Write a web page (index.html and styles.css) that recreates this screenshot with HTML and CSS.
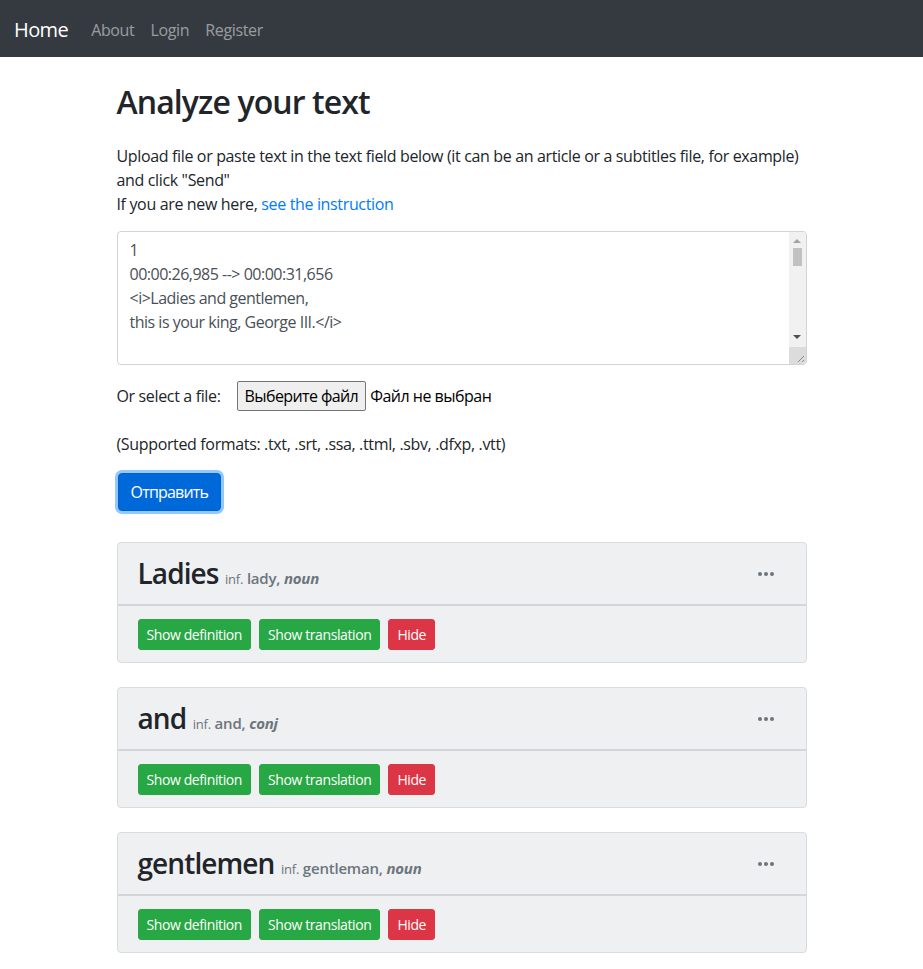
FILE: index.html
```html
<!DOCTYPE html>
<html lang="en">
<head>
<meta charset="utf-8">
<title>Analyze your text</title>
<link rel="stylesheet" href="styles.css">
</head>
<body>
<nav class="navbar">
  <a class="brand" href="#">Home</a>
  <a class="nav-link" href="#">About</a>
  <a class="nav-link" href="#">Login</a>
  <a class="nav-link" href="#">Register</a>
</nav>
<main class="container">
  <h2 class="title">Analyze your text</h2>
  <p class="intro">Upload file or paste text in the text field below (it can be an article or a subtitles file, for example) and click "Send"<br>If you are new here, <a href="#" class="link">see the instruction</a></p>
  <div class="text-input">
    <div class="text-content" contenteditable="true">1
00:00:26,985 --&gt; 00:00:31,656
&lt;i&gt;Ladies and gentlemen,
this is your king, George III.&lt;/i&gt;</div>
    <div class="scrollbar">
      <span class="arrow-up"></span>
      <span class="thumb"></span>
      <span class="track"></span>
      <span class="arrow-down"></span>
      <span class="grip">
        <svg width="17" height="17" viewBox="0 0 17 17"><path d="M15 9 L9 15 M15 13 L13 15" stroke="#8a8a8a" stroke-width="1" fill="none"/></svg>
      </span>
    </div>
  </div>
  <div class="file-row">
    <span class="file-label">Or select a file:</span>
    <span class="file-btn">Выберите файл</span>
    <span class="file-name">Файл не выбран</span>
  </div>
  <p class="formats">(Supported formats: .txt, .srt, .ssa, .ttml, .sbv, .dfxp, .vtt)</p>
  <button class="btn-send" type="button">Отправить</button>

  <section class="word-card">
    <div class="card-header">
      <h3 class="word">Ladies <small class="meta"><span class="inf">inf.</span> lady, <em>noun</em></small></h3>
      <span class="dots"><i></i><i></i><i></i></span>
    </div>
    <div class="card-body">
      <button class="btn btn-green" type="button">Show definition</button>
      <button class="btn btn-green" type="button">Show translation</button>
      <button class="btn btn-red" type="button">Hide</button>
    </div>
  </section>

  <section class="word-card">
    <div class="card-header">
      <h3 class="word">and <small class="meta"><span class="inf">inf.</span> and, <em>conj</em></small></h3>
      <span class="dots"><i></i><i></i><i></i></span>
    </div>
    <div class="card-body">
      <button class="btn btn-green" type="button">Show definition</button>
      <button class="btn btn-green" type="button">Show translation</button>
      <button class="btn btn-red" type="button">Hide</button>
    </div>
  </section>

  <section class="word-card">
    <div class="card-header">
      <h3 class="word">gentlemen <small class="meta"><span class="inf">inf.</span> gentleman, <em>noun</em></small></h3>
      <span class="dots"><i></i><i></i><i></i></span>
    </div>
    <div class="card-body">
      <button class="btn btn-green" type="button">Show definition</button>
      <button class="btn btn-green" type="button">Show translation</button>
      <button class="btn btn-red" type="button">Hide</button>
    </div>
  </section>
</main>
</body>
</html>
```
FILE: styles.css
```css
* { box-sizing: border-box; }
html, body { margin: 0; padding: 0; }
body {
  font-family: "Open Sans", "Noto Sans", sans-serif;
  font-size: 16px;
  line-height: 1.5;
  color: #212529;
  background: #fff;
  letter-spacing: -0.35px;
}
.navbar {
  background: #343a40;
  height: 57px;
  display: flex;
  align-items: center;
  padding: 2px 16px 0 14px;
}
.brand {
  color: #fff;
  font-size: 20px;
  text-decoration: none;
  margin-right: 15px;
  line-height: 30px;
  letter-spacing: -0.6px;
}
.nav-link {
  color: rgba(255,255,255,.5);
  text-decoration: none;
  padding: 0 8px;
  line-height: 24px;
}
.container {
  width: 720px;
  margin: 0 auto;
  padding: 0 15px;
}
.title {
  font-size: 32px;
  font-weight: 600;
  line-height: 1.2;
  margin: 26px 0 23px;
  letter-spacing: -0.9px;
}
.intro { margin: 0 0 15px; }
.link { color: #007bff; text-decoration: none; }
.text-input {
  display: flex;
  width: 100%;
  height: 134px;
  border: 1px solid #ced4da;
  border-radius: 4px;
  margin: 0 0 16px;
  overflow: hidden;
}
.text-content {
  flex: 1;
  padding: 6px 12px;
  white-space: pre-wrap;
  color: #495057;
  letter-spacing: -0.5px;
  outline: none;
}
.scrollbar {
  width: 17px;
  background: #f1f1f1;
  display: flex;
  flex-direction: column;
  align-items: center;
}
.arrow-up, .arrow-down {
  width: 0;
  height: 0;
  border-left: 4px solid transparent;
  border-right: 4px solid transparent;
}
.arrow-up {
  border-bottom: 4px solid #a3a3a3;
  margin: 7px 0 5px;
}
.thumb {
  width: 9px;
  height: 18px;
  background: #c1c1c1;
}
.track { flex: 1; }
.arrow-down {
  border-top: 4px solid #505050;
  margin: 0 0 8px;
}
.grip {
  width: 17px;
  height: 17px;
  background: #dcdcdc;
  display: block;
}
.grip svg { display: block; }
.file-row {
  display: flex;
  align-items: center;
  height: 30px;
}
.file-label { margin-right: 16px; }
.file-btn {
  display: inline-block;
  background: #efefef;
  border: 1px solid #767676;
  border-radius: 2px;
  padding: 0 7px;
  line-height: 28px;
  height: 30px;
  color: #000;
  margin-right: 4px;
  letter-spacing: -0.6px;
}
.file-name { color: #000; letter-spacing: -0.5px; }
.formats { margin: 21px 0 17px; }
.btn-send {
  font: inherit;
  letter-spacing: -0.8px;
  color: #fff;
  background: #0069d9;
  border: 1px solid #0062cc;
  border-radius: 4px;
  padding: 6px 12px;
  line-height: 24px;
  box-shadow: 0 0 0 3px rgba(38,143,255,.5);
  margin: 0 0 31px 1px;
  display: block;
}
.word-card {
  background: #eff0f2;
  border: 1px solid #dadbdd;
  border-radius: 4px;
  margin-bottom: 24px;
}
.card-header {
  display: flex;
  align-items: center;
  justify-content: space-between;
  padding: 0 32px 0 20px;
  height: 63px;
  border-bottom: 2px solid #d4d5d8;
}
.word {
  margin: 0;
  font-size: 28px;
  font-weight: 600;
  line-height: 1.2;
  letter-spacing: -0.9px;
}
.meta {
  color: #6c757d;
  font-size: 15px;
  font-weight: 600;
  letter-spacing: -0.2px;
}
.meta .inf { font-size: 13px; font-weight: 400; }
.meta em { font-style: italic; font-weight: 700; }
.dots { display: flex; gap: 2px; }
.dots i {
  display: block;
  width: 4px;
  height: 4px;
  border-radius: 50%;
  background: #6c757d;
}
.card-body {
  display: flex;
  gap: 8px;
  padding: 13px 20px 12px;
}
.btn {
  font: inherit;
  font-size: 14px;
  letter-spacing: -0.4px;
  line-height: 21px;
  padding: 4px 8px;
  border-radius: 3px;
  color: #fff;
  border: 1px solid transparent;
}
.btn-green { background: #28a745; border-color: #28a745; }
.btn-red { background: #dc3545; border-color: #dc3545; }
```
